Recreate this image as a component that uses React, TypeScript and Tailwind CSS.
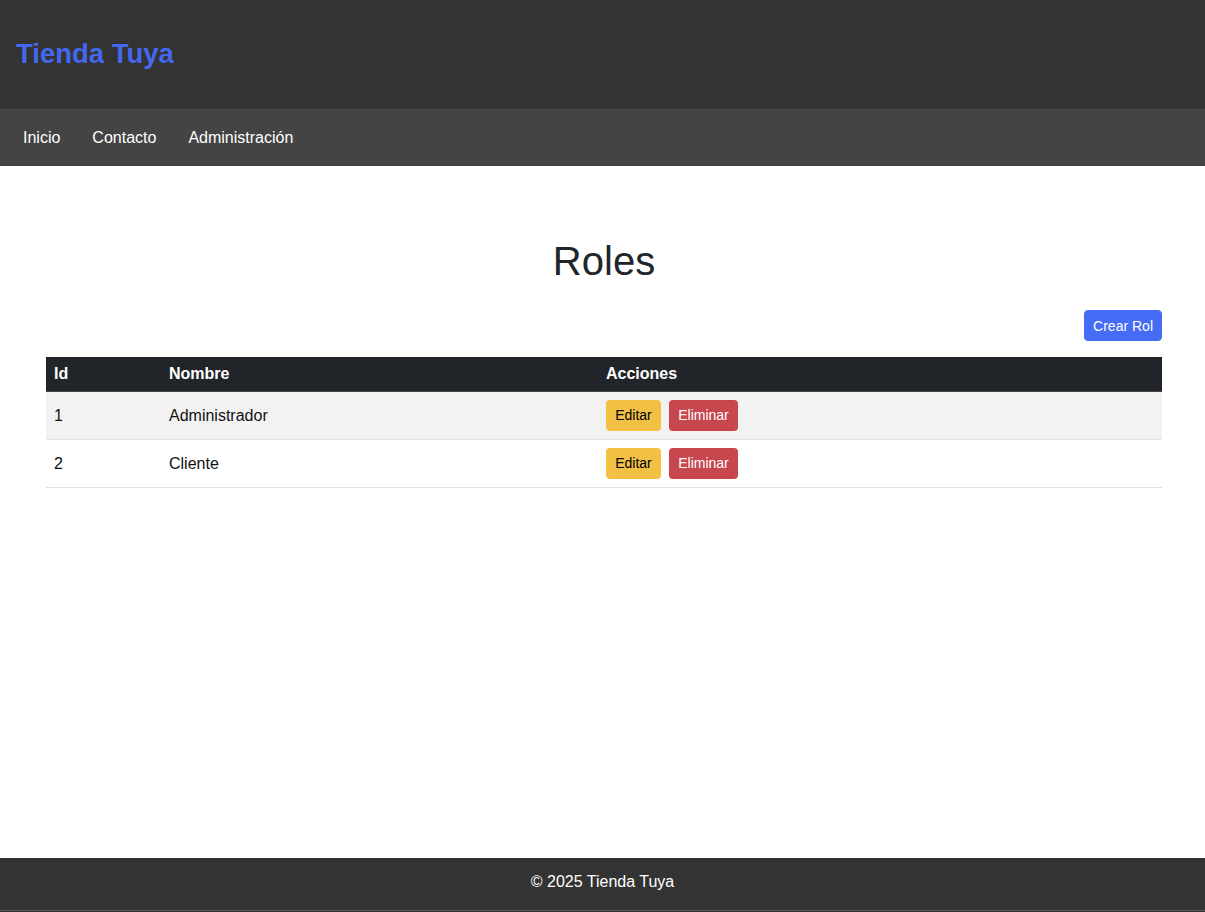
const roles = [
  { id: 1, nombre: "Administrador" },
  { id: 2, nombre: "Cliente" },
];

const App = () => {
  return (
    <div className="flex min-h-[912px] flex-col bg-white font-['Liberation_Sans',Arial,sans-serif]">
      <header className="flex h-[109px] items-center bg-[#333333] px-4 pb-[2px]">
        <h1 className="text-[27.5px] font-bold text-[#4368ee]">Tienda Tuya</h1>
      </header>
      <nav className="flex h-[57px] items-center gap-8 bg-[#444444] px-[23px] text-base text-white">
        <a href="#">Inicio</a>
        <a href="#">Contacto</a>
        <a href="#">Administración</a>
      </nav>

      <main className="flex-1 pt-[71px]">
        <div className="ml-[46px] w-[1116px]">
          <h2 className="text-center text-[40px] leading-[48px] text-[#212529]">Roles</h2>
          <div className="mt-[25px] flex justify-end">
            <button className="h-[31px] rounded border border-[#446cf4] bg-[#446cf4] px-2 text-sm text-white">
              Crear Rol
            </button>
          </div>
          <table className="mt-4 w-full border-collapse text-left text-base text-[#111]">
            <thead>
              <tr className="h-[34px] bg-[#212529] font-bold text-white">
                <th className="w-[115px] border-b border-[#444] px-2">Id</th>
                <th className="w-[437px] border-b border-[#444] px-2">Nombre</th>
                <th className="border-b border-[#444] px-2">Acciones</th>
              </tr>
            </thead>
            <tbody>
              {roles.map((rol, i) => (
                <tr key={rol.id} className={i % 2 === 0 ? "bg-[#f2f2f2]" : "bg-white"}>
                  <td className="h-[48px] border-b border-[#dee2e6] px-2 pt-[2px]">{rol.id}</td>
                  <td className="border-b border-[#dee2e6] px-2 pt-[2px]">{rol.nombre}</td>
                  <td className="border-b border-[#dee2e6] px-2">
                    <div className="flex gap-2">
                      <button className="h-[31px] w-[55px] rounded bg-[#f2c144] text-sm text-black">Editar</button>
                      <button className="h-[31px] w-[69px] rounded bg-[#c8464d] text-sm text-white">Eliminar</button>
                    </div>
                  </td>
                </tr>
              ))}
            </tbody>
          </table>
        </div>
      </main>

      <footer className="flex h-[52px] items-start justify-center bg-[#333333] pt-[12px] text-base text-white">
        © 2025 Tienda Tuya
      </footer>
      <div className="h-[2px] border-t border-[#5c5c5c] bg-[#333333]" />
    </div>
  );
};

export default App;
